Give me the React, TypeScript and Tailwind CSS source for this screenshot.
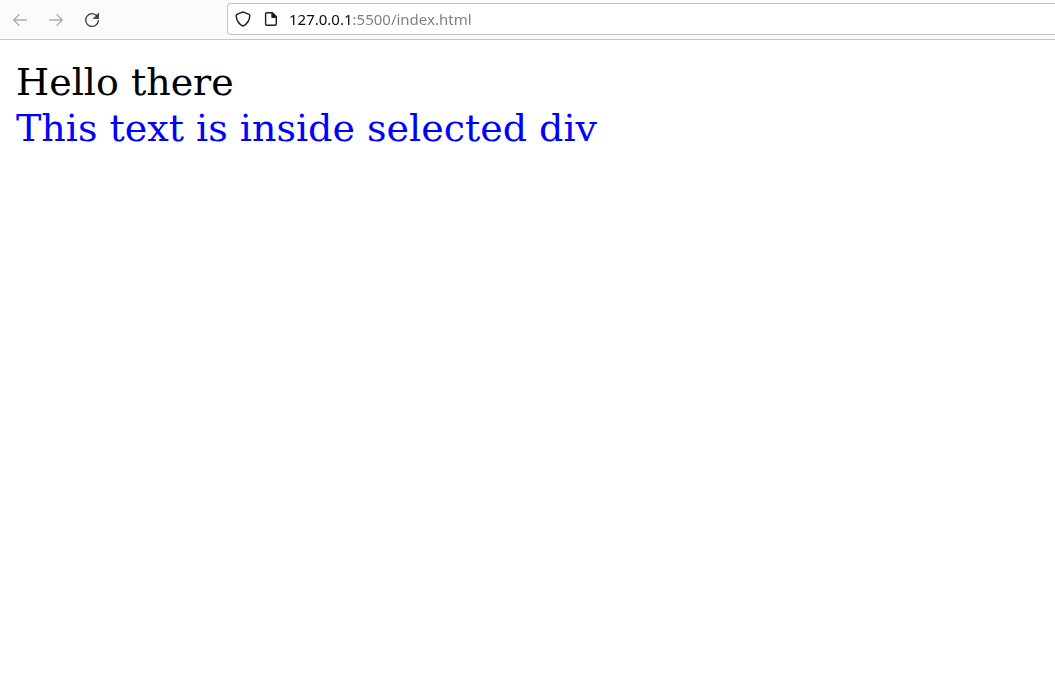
import { useState } from "react";
import type { ReactNode } from "react";

type NavButtonProps = {
  label: string;
  disabled?: boolean;
  onClick?: () => void;
  children: ReactNode;
};

function NavButton({ label, disabled, onClick, children }: NavButtonProps) {
  return (
    <button
      type="button"
      aria-label={label}
      disabled={disabled}
      onClick={onClick}
      className="flex size-8 items-center justify-center rounded text-[#3c3c3c] disabled:text-[#aeaeae]"
    >
      <svg viewBox="0 0 16 16" className="size-4" fill="none" stroke="currentColor" strokeWidth="1.3" strokeLinecap="round" strokeLinejoin="round">
        {children}
      </svg>
    </button>
  );
}

function ShieldIcon() {
  return (
    <svg viewBox="0 0 16 16" className="size-4 shrink-0" fill="none" stroke="#1c1c1c" strokeWidth="1.4" strokeLinejoin="round" aria-hidden="true">
      <path d="M8 .9 14 3.4c.6.3.8.7.8 1.2C14.6 9 12.6 12.8 8 15.2 3.4 12.8 1.4 9 1.2 4.6c0-.5.2-.9.8-1.2Z" />
    </svg>
  );
}

function PageIcon() {
  return (
    <svg viewBox="0 0 16 16" className="size-4 shrink-0" aria-hidden="true">
      <path d="M3.9 1.7h5.3l4.1 4v7.3a1.3 1.3 0 0 1-1.3 1.3H3.9a1.3 1.3 0 0 1-1.3-1.3V3a1.3 1.3 0 0 1 1.3-1.3Z" fill="none" stroke="#1c1c1c" strokeWidth="1.4" strokeLinejoin="round" />
      <path d="M8.3 1.2h1.3L14 5.6V7H9.3a1 1 0 0 1-1-1Z" fill="#1c1c1c" />
    </svg>
  );
}

function Toolbar() {
  const [address, setAddress] = useState("127.0.0.1:5500/index.html");
  return (
    <header className="flex h-10 items-start border-b border-[#c6c6c6] bg-[#fbfbfb] pt-[3px] pl-1">
      <nav aria-label="History" className="mt-px mr-[119px] flex shrink-0 gap-1">
        <NavButton label="Back" disabled>
          <path d="M14.5 8H1.8M7 2.7 1.7 8 7 13.3" />
        </NavButton>
        <NavButton label="Forward" disabled>
          <path d="M1.5 8h12.7M9 2.7 14.3 8 9 13.3" />
        </NavButton>
        <NavButton label="Reload" onClick={() => setAddress("127.0.0.1:5500/index.html")}>
          <path d="M13 4A6.4 6.4 0 1 0 14.4 8.6" />
          <path d="M14.6 1.4v5H9.6Z" fill="currentColor" strokeWidth="0.8" />
        </NavButton>
      </nav>
      <label className="flex h-8 min-w-0 flex-1 items-center rounded-l border border-r-0 border-[#c2c2c2] bg-white pl-[7px]">
        <ShieldIcon />
        <span className="w-3 shrink-0" />
        <PageIcon />
        <input
          type="text"
          aria-label="Address"
          value={address}
          onChange={(event) => setAddress(event.target.value)}
          className="ml-[10px] min-w-0 flex-1 bg-[linear-gradient(to_right,#0c0c0d_63px,#7c7c7c_63px)] bg-clip-text font-['Noto_Sans',sans-serif] text-[15px] leading-6 text-transparent caret-black outline-none"
        />
      </label>
    </header>
  );
}

export default function App() {
  return (
    <div className="min-h-screen bg-white">
      <Toolbar />
      <main className="px-4 pt-[19px] font-['DejaVu_Serif',serif] text-[38px] leading-[46px] text-black">
        <div>Hello there</div>
        <div className="text-[#0000ff]">This text is inside selected div</div>
      </main>
    </div>
  );
}
